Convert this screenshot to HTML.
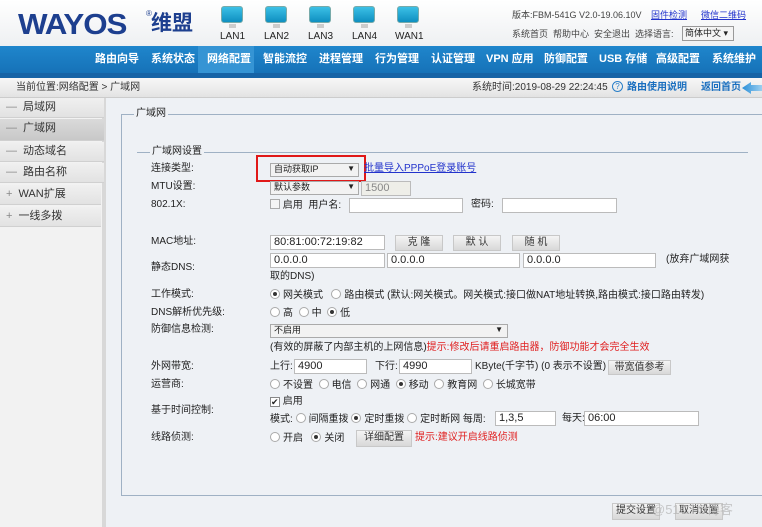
<!DOCTYPE html>
<html><head><meta charset="utf-8"><style>
*{margin:0;padding:0;box-sizing:border-box}
body{width:762px;height:527px;overflow:hidden;font-family:"Liberation Sans","Noto Sans CJK SC",sans-serif;font-size:11px;color:#222;background:#eef1f5;position:relative;line-height:1.2}
.a{position:absolute;white-space:nowrap}
#hdr{position:absolute;left:0;top:0;width:762px;height:46px;background:linear-gradient(#fff,#eef0f2)}
#nav{position:absolute;left:0;top:46px;width:762px;height:27px;background:linear-gradient(#1f86cc,#1672b8)}
#nav2{position:absolute;left:0;top:73px;width:762px;height:5px;background:#1663a6}
#nav span{position:absolute;top:7px;color:#fff;font-weight:bold;font-size:11px}
#crumb{position:absolute;left:0;top:78px;width:762px;height:20px;background:linear-gradient(#f7f7f7,#e3e3e3);border-bottom:1px solid #ccc}
#side{position:absolute;left:0;top:98px;width:106px;height:429px;background:#f2f2f2;border-right:4px solid #d8d8d8}
.si{position:absolute;left:0;width:104px;height:20px;background:linear-gradient(#f0f0f0,#e2e2e2);border-bottom:1px solid #d0d0d0;font-size:11px;padding:3px 0 0 6px;color:#333}
.si b{font-weight:normal;color:#888;margin-right:6px}
.mon{position:absolute;top:6px;width:22px;height:17px;border-radius:3px;background:linear-gradient(#3cc0e6,#0e8fc0);border:1px solid #7aa}
.mon:after{content:"";position:absolute;left:7px;top:17px;width:7px;height:4px;background:#ccc}
.ml{position:absolute;top:31px;font-size:10px;color:#222}
.in{position:absolute;height:15px;background:#fff;border:1px solid #bbb;font-size:11px;padding-left:3px;line-height:13px}
.btn{position:absolute;height:16px;background:linear-gradient(#f4f4f4,#d8d8d8);border:1px solid #c8c8c8;font-size:10px;text-align:center;line-height:14px;color:#333}
.r{display:inline-block;width:10px;height:10px;border:1px solid #aaa;border-radius:50%;background:#fff;vertical-align:-1px;margin-right:3px;position:relative}
.r.on:after{content:"";position:absolute;left:2px;top:2px;width:4px;height:4px;border-radius:50%;background:#333}
.red{color:#e02020}
</style></head><body>
<div id="hdr"></div>
<div class="a" style="left:18px;top:8px;font-size:29px;font-weight:900;color:#1d3f8f;letter-spacing:-1px;transform:scaleX(1.08);transform-origin:left;font-family:'Liberation Sans',sans-serif">WAYOS</div>
<div class="a" style="left:146px;top:9px;font-size:8px;color:#1d3f8f">®</div>
<div class="a" style="left:151px;top:11px;font-size:21px;font-weight:bold;color:#1d3f8f">维盟</div>
<div class="mon" style="left:221px"></div><div class="ml" style="left:220px">LAN1</div>
<div class="mon" style="left:265px"></div><div class="ml" style="left:264px">LAN2</div>
<div class="mon" style="left:309px"></div><div class="ml" style="left:308px">LAN3</div>
<div class="mon" style="left:353px"></div><div class="ml" style="left:352px">LAN4</div>
<div class="mon" style="left:397px"></div><div class="ml" style="left:395px">WAN1</div>
<div class="a" style="left:512px;top:10px;font-size:9px;color:#444">版本:FBM-541G V2.0-19.06.10V</div>
<div class="a" style="left:651px;top:10px;font-size:9px;color:#2233cc;text-decoration:underline">固件检测</div>
<div class="a" style="left:701px;top:10px;font-size:9px;color:#2233cc;text-decoration:underline">微信二维码</div>
<div class="a" style="left:512px;top:29px;font-size:9px;color:#444">系统首页&nbsp; 帮助中心&nbsp; 安全退出&nbsp; 选择语言:</div>
<div class="a" style="left:682px;top:26px;width:52px;height:15px;border:1px solid #999;background:#f4f4f4;font-size:9px;padding:1px 2px">简体中文 ▾</div>
<div id="nav">
<div class="a" style="left:198px;top:0;width:56px;height:27px;background:#3594d4"></div>
<span style="left:95px">路由向导</span><span style="left:151px">系统状态</span><span style="left:207px">网络配置</span><span style="left:263px">智能流控</span><span style="left:319px">进程管理</span><span style="left:375px">行为管理</span><span style="left:431px">认证管理</span><span style="left:486px">VPN 应用</span><span style="left:544px">防御配置</span><span style="left:599px">USB 存储</span><span style="left:656px">高级配置</span><span style="left:712px">系统维护</span>
</div>
<div id="nav2"></div>
<div id="crumb">
<div class="a" style="left:16px;top:4px;font-size:10px;color:#333">当前位置:网络配置 &gt; 广域网</div>
<div class="a" style="left:472px;top:4px;font-size:10px;color:#333">系统时间:2019-08-29 22:24:45</div>
<div class="a" style="left:612px;top:3px;width:11px;height:11px;border:1px solid #2a7fc8;border-radius:50%;color:#2a7fc8;font-size:8px;text-align:center;line-height:9px">?</div>
<div class="a" style="left:627px;top:4px;font-size:10px;color:#1a6fbf;font-weight:bold">路由使用说明</div>
<div class="a" style="left:701px;top:4px;font-size:10px;color:#1a6fbf;font-weight:bold">返回首页</div>
<div class="a" style="left:742px;top:4px;width:20px;height:12px;background:linear-gradient(90deg,#2a8fd8,#9ccff0);clip-path:polygon(0 50%,45% 0,45% 25%,100% 25%,100% 75%,45% 75%,45% 100%)"></div>
</div>
<div id="side">
<div class="si" style="top:0"><b>—</b>局域网</div>
<div class="si" style="top:21px;height:22px;background:linear-gradient(#dadada,#c8c8c8)"><b>—</b>广域网</div>
<div class="si" style="top:44px"><b>—</b>动态域名</div>
<div class="si" style="top:65px"><b>—</b>路由名称</div>
<div class="si" style="top:87px;width:101px"><b>+</b>WAN扩展</div>
<div class="si" style="top:109px;width:101px"><b>+</b>一线多拨</div>
</div>
<div class="a" style="left:121px;top:114px;width:641px;height:382px;border:1px solid #9fb1c4;border-right:none"></div>
<div class="a" style="left:134px;top:108px;background:#eef1f5;padding:0 2px;font-size:10px">广域网</div>
<div class="a" style="left:137px;top:152px;width:611px;border-top:1px solid #9fb1c4"></div>
<div class="a" style="left:150px;top:146px;background:#eef1f5;padding:0 2px;font-size:10px">广域网设置</div>
<div class="a" style="left:151px;top:163px;font-size:10px">连接类型:</div>
<div class="a" style="left:151px;top:181px;font-size:10px">MTU设置:</div>
<div class="a" style="left:151px;top:199px;font-size:10px">802.1X:</div>
<div class="a" style="left:151px;top:236px;font-size:10px">MAC地址:</div>
<div class="a" style="left:151px;top:262px;font-size:10px">静态DNS:</div>
<div class="a" style="left:151px;top:289px;font-size:10px">工作模式:</div>
<div class="a" style="left:151px;top:307px;font-size:10px">DNS解析优先级:</div>
<div class="a" style="left:151px;top:324px;font-size:10px">防御信息检测:</div>
<div class="a" style="left:151px;top:361px;font-size:10px">外网带宽:</div>
<div class="a" style="left:151px;top:379px;font-size:10px">运营商:</div>
<div class="a" style="left:151px;top:405px;font-size:10px">基于时间控制:</div>
<div class="a" style="left:151px;top:432px;font-size:10px">线路侦测:</div>

<div class="a" style="left:270px;top:163px;width:89px;height:14px;border:1px solid #aaa;background:#f2f2f2;font-size:9px;padding-left:3px">自动获取IP<span style="position:absolute;right:3px;font-size:8px">▼</span></div>
<div class="a" style="left:256px;top:155px;width:110px;height:27px;border:2px solid #e01818"></div>
<div class="a" style="left:364px;top:163px;font-size:10px;color:#2233cc;text-decoration:underline">批量导入PPPoE登录账号</div>
<div class="a" style="left:270px;top:181px;width:89px;height:14px;border:1px solid #aaa;background:#f2f2f2;font-size:9px;padding-left:3px">默认参数<span style="position:absolute;right:3px;font-size:8px">▼</span></div>
<div class="in" style="left:361px;top:181px;width:50px;background:#eeeee8;color:#888">1500</div>
<div class="a" style="left:270px;top:199px;font-size:10px"><span style="display:inline-block;width:10px;height:10px;border:1px solid #aaa;background:#f4f4f4;vertical-align:-1px"></span> 启用&nbsp; 用户名:</div>
<div class="in" style="left:349px;top:198px;width:114px"></div>
<div class="a" style="left:471px;top:199px;font-size:10px">密码:</div>
<div class="in" style="left:502px;top:198px;width:115px"></div>
<div class="in" style="left:270px;top:235px;width:115px">80:81:00:72:19:82</div>
<div class="btn" style="left:395px;top:235px;width:48px">克 隆</div>
<div class="btn" style="left:453px;top:235px;width:48px">默 认</div>
<div class="btn" style="left:512px;top:235px;width:48px">随 机</div>
<div class="in" style="left:270px;top:253px;width:115px">0.0.0.0</div>
<div class="in" style="left:387px;top:253px;width:133px">0.0.0.0</div>
<div class="in" style="left:523px;top:253px;width:133px">0.0.0.0</div>
<div class="a" style="left:666px;top:254px;font-size:10px">(放弃广域网获</div>
<div class="a" style="left:270px;top:271px;font-size:10px">取的DNS)</div>
<div class="a" style="left:270px;top:289px;font-size:10px"><span class="r on"></span>网关模式&nbsp;&nbsp; <span class="r"></span>路由模式 (默认:网关模式。网关模式:接口做NAT地址转换,路由模式:接口路由转发)</div>
<div class="a" style="left:270px;top:307px;font-size:10px"><span class="r"></span>高&nbsp; <span class="r"></span>中&nbsp; <span class="r on"></span>低</div>
<div class="a" style="left:270px;top:324px;width:238px;height:14px;border:1px solid #aaa;background:#f2f2f2;font-size:9px;padding-left:3px">不启用<span style="position:absolute;right:4px;font-size:8px">▼</span></div>
<div class="a" style="left:270px;top:342px;font-size:10px">(有效的屏蔽了内部主机的上网信息)<span class="red">提示:修改后请重启路由器，防御功能才会完全生效</span></div>
<div class="a" style="left:270px;top:361px;font-size:10px">上行:</div>
<div class="in" style="left:294px;top:359px;width:73px">4900</div>
<div class="a" style="left:375px;top:361px;font-size:10px">下行:</div>
<div class="in" style="left:399px;top:359px;width:73px">4990</div>
<div class="a" style="left:475px;top:361px;font-size:10px">KByte(千字节) (0 表示不设置)</div>
<div class="btn" style="left:608px;top:360px;width:63px;height:15px">带宽值参考</div>
<div class="a" style="left:270px;top:379px;font-size:10px"><span class="r"></span>不设置&nbsp; <span class="r"></span>电信&nbsp; <span class="r"></span>网通&nbsp; <span class="r on"></span>移动&nbsp; <span class="r"></span>教育网&nbsp; <span class="r"></span>长城宽带</div>
<div class="a" style="left:270px;top:396px;font-size:10px"><span style="display:inline-block;width:10px;height:10px;border:1px solid #888;background:#fff;vertical-align:-1px;font-size:9px;line-height:8px">✔</span> 启用</div>
<div class="a" style="left:270px;top:413px;font-size:10px">模式: <span class="r"></span>间隔重拨 <span class="r on"></span>定时重拨 <span class="r"></span>定时断网 每周:</div>
<div class="in" style="left:495px;top:411px;width:61px">1,3,5</div>
<div class="a" style="left:562px;top:413px;font-size:10px">每天:</div>
<div class="in" style="left:584px;top:411px;width:115px">06:00</div>
<div class="a" style="left:270px;top:432px;font-size:10px"><span class="r"></span>开启&nbsp;&nbsp; <span class="r on"></span>关闭</div>
<div class="btn" style="left:356px;top:430px;width:56px;height:17px">详细配置</div>
<div class="a red" style="left:415px;top:432px;font-size:10px">提示:建议开启线路侦测</div>
<div class="btn" style="left:612px;top:503px;width:48px;height:17px">提交设置</div>
<div class="btn" style="left:675px;top:503px;width:48px;height:17px">取消设置</div>
<div class="a" style="left:652px;top:502px;font-size:13px;color:rgba(180,180,180,0.7)">@51CTO博客</div>
</body></html>
